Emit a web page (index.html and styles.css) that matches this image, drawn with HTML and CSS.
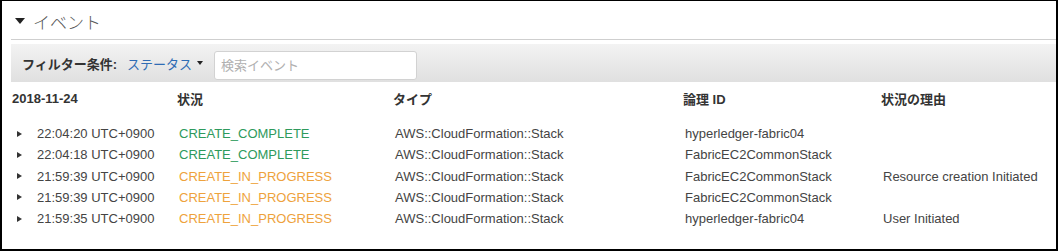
FILE: index.html
```html
<!DOCTYPE html>
<html lang="ja">
<head>
    <meta charset="UTF-8">
    <meta name="viewport" content="width=device-width, initial-scale=1.0">
    <title>イベント</title>
    <link rel="stylesheet" href="styles.css">
</head>
<body>
    <div class="frame">
        <div class="section-head">
            <span class="caret-down"></span>
            <span class="section-title">イベント</span>
        </div>
        <div class="filter-bar">
            <span class="filter-label">フィルター条件:</span>
            <span class="filter-select">ステータス<span class="caret-small"></span></span>
            <input class="search" type="text" placeholder="検索イベント">
        </div>
        <div class="events">
            <div class="row head">
                <div>2018-11-24</div>
                <div>状況</div>
                <div>タイプ</div>
                <div>論理 ID</div>
                <div>状況の理由</div>
            </div>
            <div class="rows">
                <div class="row">
                    <div class="time"><span class="caret-right"></span>22:04:20 UTC+0900</div>
                    <div class="status complete">CREATE_COMPLETE</div>
                    <div>AWS::CloudFormation::Stack</div>
                    <div>hyperledger-fabric04</div>
                    <div></div>
                </div>
                <div class="row">
                    <div class="time"><span class="caret-right"></span>22:04:18 UTC+0900</div>
                    <div class="status complete">CREATE_COMPLETE</div>
                    <div>AWS::CloudFormation::Stack</div>
                    <div>FabricEC2CommonStack</div>
                    <div></div>
                </div>
                <div class="row">
                    <div class="time"><span class="caret-right"></span>21:59:39 UTC+0900</div>
                    <div class="status progress">CREATE_IN_PROGRESS</div>
                    <div>AWS::CloudFormation::Stack</div>
                    <div>FabricEC2CommonStack</div>
                    <div>Resource creation Initiated</div>
                </div>
                <div class="row">
                    <div class="time"><span class="caret-right"></span>21:59:39 UTC+0900</div>
                    <div class="status progress">CREATE_IN_PROGRESS</div>
                    <div>AWS::CloudFormation::Stack</div>
                    <div>FabricEC2CommonStack</div>
                    <div></div>
                </div>
                <div class="row">
                    <div class="time"><span class="caret-right"></span>21:59:35 UTC+0900</div>
                    <div class="status progress">CREATE_IN_PROGRESS</div>
                    <div>AWS::CloudFormation::Stack</div>
                    <div>hyperledger-fabric04</div>
                    <div>User Initiated</div>
                </div>
            </div>
        </div>
    </div>
</body>
</html>
```

FILE: styles.css
```css
html, body {
    margin: 0;
    padding: 0;
    background: #fff;
}
body {
    font-family: "Liberation Sans", Arial, "Noto Sans CJK JP", sans-serif;
    font-size: 13px;
    color: #444;
}
.frame {
    box-sizing: border-box;
    width: 1058px;
    height: 251px;
    border: 2px solid #000;
    border-top-width: 1px;
    padding-left: 9px;
}
.section-head {
    display: flex;
    align-items: center;
    height: 36px;
    padding-top: 2px;
    border-bottom: 1px solid #cfcfcf;
}
.caret-down {
    width: 0;
    height: 0;
    margin-left: 4px;
    margin-right: 8px;
    border-left: 5px solid transparent;
    border-right: 5px solid transparent;
    border-top: 6px solid #222;
}
.section-title {
    font-family: "Noto Sans CJK JP", sans-serif;
    font-size: 17px;
    color: #555;
    font-weight: 300;
}
.filter-bar {
    display: flex;
    align-items: center;
    height: 38px;
    margin-top: 4px;
    padding-left: 11px;
    background: linear-gradient(#f3f3f3, #e0e0e0);
}
.filter-label {
    font-weight: bold;
    color: #333;
}
.filter-select {
    display: flex;
    align-items: center;
    margin-left: 10px;
    color: #2f6cb4;
}
.caret-small {
    width: 0;
    height: 0;
    margin-left: 5px;
    border-left: 3px solid transparent;
    border-right: 3px solid transparent;
    border-top: 4px solid #222;
}
.search {
    box-sizing: border-box;
    width: 203px;
    height: 29px;
    margin-left: 11px;
    margin-top: 4px;
    padding: 0 6px;
    border: 1px solid #d2d2d2;
    border-radius: 3px;
    background: #fff;
    font-family: inherit;
    font-size: 13px;
}
.search::placeholder {
    color: #b0b0b0;
}
.events {
    padding-left: 1px;
}
.row {
    display: grid;
    grid-template-columns: 165px 216px 290px 198px 1fr;
    align-items: center;
    height: 21.25px;
}
.row.head {
    height: 20px;
    padding-top: 6px;
    font-weight: bold;
    color: #333;
}
.rows {
    margin-top: 15px;
}
.rows .row > div {
    padding-left: 2px;
    white-space: nowrap;
}
.time {
    display: flex;
    align-items: center;
}
.caret-right {
    width: 0;
    height: 0;
    margin-left: 3px;
    margin-right: 15px;
    border-top: 3.5px solid transparent;
    border-bottom: 3.5px solid transparent;
    border-left: 5px solid #333;
}
.complete { color: #2e9a5c; }
.progress { color: #eea23c; }
```
